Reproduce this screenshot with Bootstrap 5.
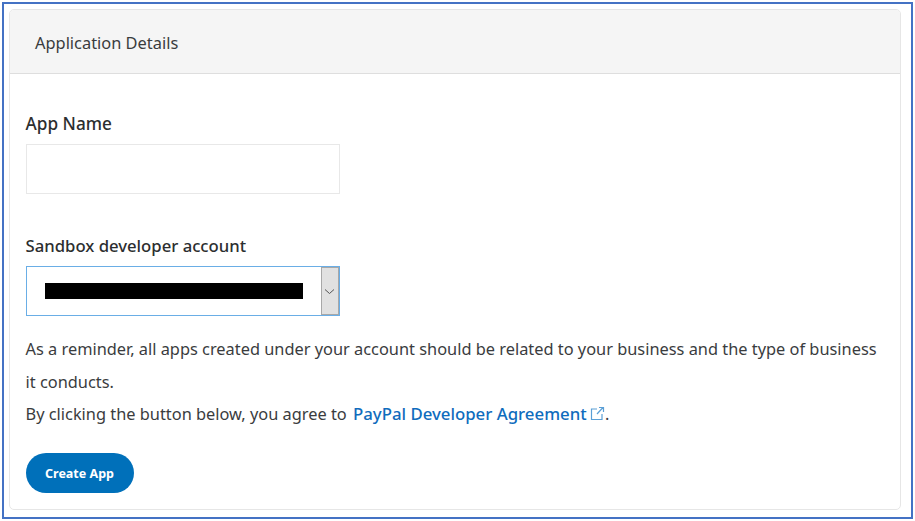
<!DOCTYPE html>
<html lang="en">
<head>
<meta charset="utf-8">
<title>Application Details</title>
<link href="https://cdn.jsdelivr.net/npm/bootstrap@5.3.0/dist/css/bootstrap.min.css" rel="stylesheet">
<style>
html,body{height:100%;background:#fff;overflow:hidden}
body{font-family:"Noto Sans","Open Sans",sans-serif;color:#2c2e2f;padding:2px}
.shot-frame{width:911px;height:517px;border:2px solid #4472c4;padding:5px 10px 7px 5px}
.app-card{height:501px;border:1.5px solid #e6e6e6;border-radius:5px;overflow:hidden}
.app-head{height:64px;padding:3px 0 0 25px;background:#f5f5f5;border-bottom:1px solid #dedede;font-size:16.4px;color:#3a3c3e;border-radius:0}
.app-body{padding:39px 15px 0 15.5px}
.fld-label{font-size:16.7px;font-weight:500;line-height:22px;margin:0 0 9px;color:#2c2e2f;display:block}
.fld-first{font-size:17.2px}
.fld-box{width:314px;height:50px;border:1.5px solid #e8e8e8;border-radius:0;padding:0}
.fld-gap{margin-top:41px}
.fld-select{border:1.5px solid #6aaee6;background:#fff}
.sel-main{flex:1;padding-left:18px}
.sel-redact{width:258px;height:16px;background:#000}
.sel-arrow{width:18px;background:#e1e1e1;border:1px solid #a8a8a8}
.note{font-size:16.37px;line-height:32.5px;margin:17px 0 0;color:#3a3c3e;white-space:nowrap}
.pp-link{color:#0f6cbd;font-weight:500;font-size:16.8px;text-decoration:none;margin-left:2px}
.pp-ext{margin-left:-1px;margin-bottom:-1px}
.pp-create{background:#0070ba;border:0;border-radius:20px;color:#fff;font-size:12.5px;font-weight:700;width:108px;height:40px;padding:3px 0 0;margin-top:22px}
.pp-create:hover{background:#0070ba;color:#fff}
</style>
</head>
<body>
<div class="shot-frame">
  <div class="card app-card">
    <div class="app-head d-flex align-items-center">Application Details</div>
    <div class="app-body">
      <label class="fld-label fld-first" for="appname">App Name</label>
      <input id="appname" type="text" class="form-control fld-box" aria-label="App Name">
      <span class="fld-label fld-gap">Sandbox developer account</span>
      <div class="fld-box fld-select d-flex">
        <div class="sel-main d-flex align-items-center"><div class="sel-redact"></div></div>
        <div class="sel-arrow d-flex align-items-center justify-content-center">
          <svg width="11" height="7" viewBox="0 0 11 7"><path d="M1 1.500l4.500 4 4.500-4" fill="none" stroke="#555" stroke-width="1"/></svg>
        </div>
      </div>
      <p class="note">As a reminder, all apps created under your account should be related to your business and the type of business<br>it conducts.<br>By clicking the button below, you agree to <a class="pp-link" href="#">PayPal Developer Agreement <svg width="15" height="15" viewBox="0 0 15 15" class="align-baseline pp-ext"><path d="M7 3H1.500v10.500H12V8M7 8l6-6.500M9 1.500h4.500V6" fill="none" stroke="#5a9fd6" stroke-width="1.200"/></svg></a>.</p>
      <button type="button" class="btn pp-create">Create App</button>
    </div>
  </div>
</div>
</body>
</html>
